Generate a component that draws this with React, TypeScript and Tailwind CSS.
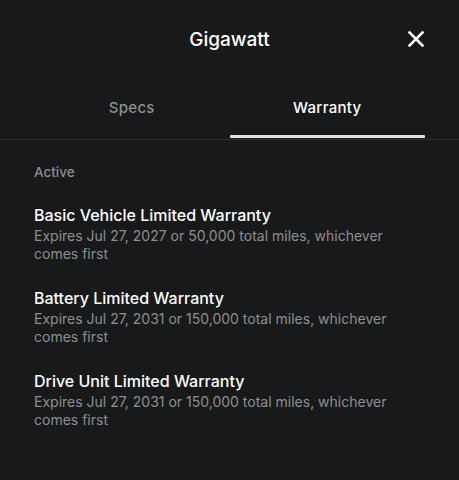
const items = [
  {
    title: "Basic Vehicle Limited Warranty",
    desc: "Expires Jul 27, 2027 or 50,000 total miles, whichever comes first",
  },
  {
    title: "Battery Limited Warranty",
    desc: "Expires Jul 27, 2031 or 150,000 total miles, whichever comes first",
  },
  {
    title: "Drive Unit Limited Warranty",
    desc: "Expires Jul 27, 2031 or 150,000 total miles, whichever comes first",
  },
];

function Header() {
  return (
    <div className="relative flex h-[80px] items-center justify-center">
      <p className="text-[19px] font-medium text-white">Gigawatt</p>
      <button className="absolute right-[35px] top-[31px] text-white" aria-label="Close">
        <svg width="16" height="16" viewBox="0 0 16 16" fill="none">
          <path d="M1.5 1.5L14.5 14.5M14.5 1.5L1.5 14.5" stroke="white" strokeWidth="2.6" strokeLinecap="square" />
        </svg>
      </button>
    </div>
  );
}

function Tabs() {
  return (
    <div className="border-b border-[#2c2d30]">
      <div className="flex px-[34px]">
        <div className="flex h-[59px] flex-1 items-center justify-center pb-[2px] text-[15px] font-medium tracking-[0.3px] text-[#8e8f91]">Specs</div>
        <div className="relative flex h-[59px] flex-1 items-center justify-center pb-[2px] text-[15px] font-medium tracking-[0.3px] text-white">
          Warranty
          <div className="absolute bottom-[1px] left-0 right-0 h-[3px] rounded-[1px] bg-[#e2e2e2]" />
        </div>
      </div>
    </div>
  );
}

export default function App() {
  return (
    <div className="h-[480px] w-full bg-[#18191b] font-['Inter',sans-serif] antialiased">
      <Header />
      <Tabs />
      <div className="px-[34px] pt-[22px]">
        <p className="text-[13.5px] font-medium text-[#8e8f91]">Active</p>
        <div className="mt-[22px] flex flex-col gap-[24px]">
          {items.map((it) => (
            <div key={it.title}>
              <p className="text-[16px] font-medium leading-[22px] text-white">{it.title}</p>
              <p className="mt-[1px] max-w-[364px] text-[14px] leading-[18px] text-[#8e8f91]">{it.desc}</p>
            </div>
          ))}
        </div>
      </div>
    </div>
  );
}
